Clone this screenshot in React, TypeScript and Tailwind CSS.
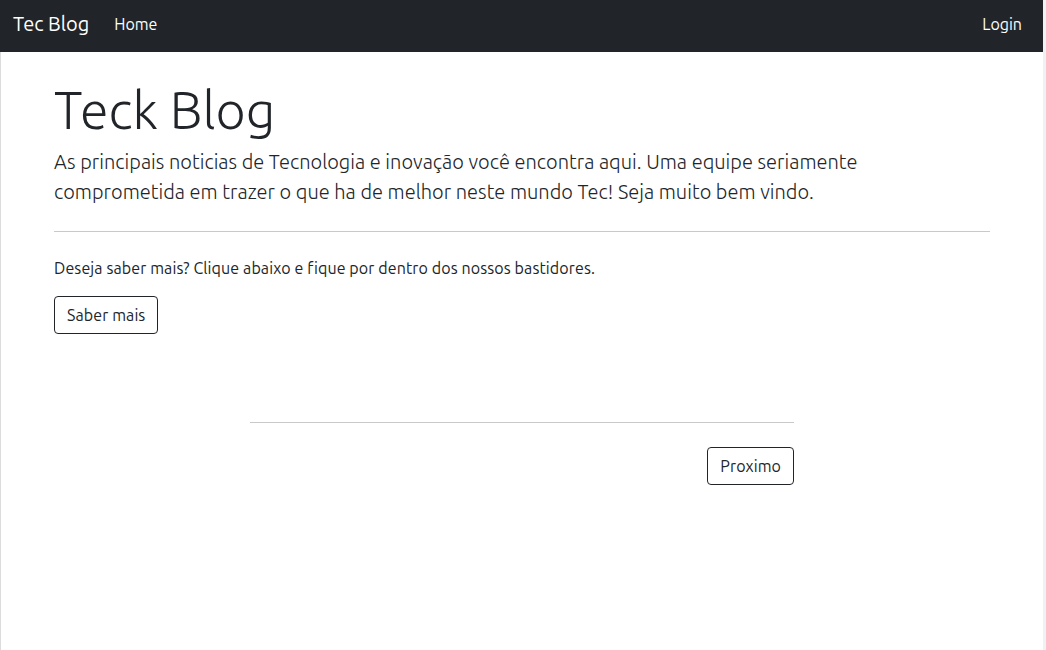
export default function App() {
  return (
    <div className="flex h-[650px] w-[1046px] overflow-hidden bg-white text-[#212529] [font-family:Ubuntu,'Noto_Sans',sans-serif]">
      <div className="flex min-w-0 flex-1 flex-col">
        <nav className="flex h-[52px] items-center bg-[#212529] pb-[4px] pl-[13px] pr-[21px] text-white">
          <a className="mr-[25px] text-[20px] leading-[30px]" href="#">
            Tec Blog
          </a>
          <a className="text-[16px] leading-6" href="#">
            Home
          </a>
          <a className="ml-auto text-[16px] leading-6" href="#">
            Login
          </a>
        </nav>

        <main className="flex-1 border-l border-[#dcdcdc]">
          <section className="mx-[53px] pt-[27px]">
            <h1 className="text-[52px] leading-[62px] font-light">Teck Blog</h1>
            <p className="mt-[6px] max-w-[820px] text-[20px] leading-[30px] font-light tracking-[0.03px]">
              As principais noticias de Tecnologia e inovação você encontra aqui. Uma equipe seriamente
              comprometida em trazer o que ha de melhor neste mundo Tec! Seja muito bem vindo.
            </p>
            <hr className="mt-[24px] border-[#c8c9ca]" />
            <p className="mt-[24px] text-[16px] leading-6 tracking-[0.11px]">
              Deseja saber mais? Clique abaixo e fique por dentro dos nossos bastidores.
            </p>
            <button className="mt-[16px] h-[38px] rounded border border-[#212529] px-3 text-[16px] tracking-[0.1px]">
              Saber mais
            </button>
          </section>

          <section className="mx-auto mt-[88px] w-[544px]">
            <hr className="border-[#c8c9ca]" />
            <div className="mt-[24px] flex justify-end">
              <button className="h-[38px] rounded border border-[#212529] px-3 text-[16px] tracking-[0.1px]">
                Proximo
              </button>
            </div>
          </section>
        </main>
      </div>
      <div className="w-[3px] bg-[#f0f1f3]" />
    </div>
  );
}
